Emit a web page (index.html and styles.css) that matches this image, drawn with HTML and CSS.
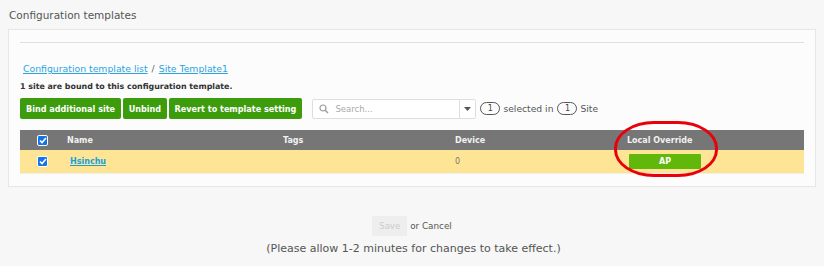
FILE: index.html
```html
<!DOCTYPE html>
<html>
<head>
<meta charset="utf-8">
<link rel="stylesheet" href="styles.css">
</head>
<body>
<div class="page">
  <div class="title">Configuration templates</div>
  <div class="panel">
    <div class="rule"></div>
    <div class="crumbs"><a>Configuration template list</a><span class="sep">/</span><a>Site Template1</a></div>
    <div class="bound">1 site are bound to this configuration template.</div>
    <div class="toolbar">
      <button class="btn">Bind additional site</button>
      <button class="btn">Unbind</button>
      <button class="btn">Revert to template setting</button>
      <div class="search">
        <svg class="mag" width="10" height="10" viewBox="0 0 10 10"><circle cx="4" cy="4" r="3" fill="none" stroke="#999" stroke-width="1.2"/><path d="M6.2 6.2 L9 9" stroke="#999" stroke-width="1.4"/></svg>
        <span class="ph">Search...</span>
        <span class="drop"><svg width="7" height="4" viewBox="0 0 7 4"><path d="M0 0 H7 L3.5 4 Z" fill="#555"/></svg></span>
      </div>
      <span class="pill">1</span><span class="info">selected in</span><span class="pill">1</span><span class="info">Site</span>
    </div>
    <div class="table">
      <div class="row head">
        <div class="c-chk"><span class="cb"><svg width="8" height="7" viewBox="0 0 8 7"><path d="M1 3.5 L3 5.5 L7 1" fill="none" stroke="#fff" stroke-width="1.6"/></svg></span></div>
        <div class="c-name">Name</div>
        <div class="c-tags">Tags</div>
        <div class="c-dev">Device</div>
        <div class="c-lo">Local Override</div>
      </div>
      <div class="row body">
        <div class="c-chk"><span class="cb"><svg width="8" height="7" viewBox="0 0 8 7"><path d="M1 3.5 L3 5.5 L7 1" fill="none" stroke="#fff" stroke-width="1.6"/></svg></span></div>
        <div class="c-name"><a>Hsinchu</a></div>
        <div class="c-tags"></div>
        <div class="c-dev">0</div>
        <div class="c-lo"><span class="ap">AP</span></div>
      </div>
      <div class="ring"></div>
    </div>
  </div>
  <div class="actions"><button class="save">Save</button><span class="or">or Cancel</span></div>
  <div class="note">(Please allow 1-2 minutes for changes to take effect.)</div>
</div>
</body>
</html>
```
FILE: styles.css
```css
* { box-sizing: border-box; }
html, body { margin: 0; padding: 0; background: #f6f7f6; }
body { font-family: "DejaVu Sans", "Liberation Sans", sans-serif; color: #444; width: 824px; height: 266px; overflow: hidden; }
.page { padding: 8px 8px 0 8px; }
.title { font-size: 10.5px; color: #555; height: 21px; line-height: 15px; padding-left: 1px; }
.panel { background: #fcfcfc; border: 1px solid #e6e6e6; height: 158px; padding: 12px 11px 0 11px; position: relative; }
.rule { height: 1px; background: #e0e0e0; margin: 0 0 20px 0; }
.crumbs { font-size: 9.3px; line-height: 12px; height: 12px; padding-left: 3px; }
.crumbs a { color: #2aa5e0; text-decoration: underline; }
.crumbs .sep { color: #666; margin: 0 4px; }
.bound { font-size: 7.9px; font-weight: bold; color: #333; margin-top: 6px; line-height: 12px; height: 12px; }
.toolbar { display: flex; align-items: center; margin-top: 5px; height: 21px; }
.btn { background: #3c9c0c; color: #fff; border: none; border-radius: 2px; font-family: inherit; font-weight: bold; font-size: 8.1px; height: 21px; padding: 0 6px; margin-right: 1.5px; }
.btn:nth-child(3) { margin-right: 10px; }
.search { width: 164px; height: 20px; border: 1px solid #dedede; background: #fff; border-radius: 2px; display: flex; align-items: center; position: relative; }
.mag { margin-left: 6px; }
.ph { font-size: 8.5px; color: #aaa; margin-left: 6px; flex: 1; }
.drop { width: 16px; height: 18px; border-left: 1px solid #dedede; display: flex; align-items: center; justify-content: center; }
.pill { display: inline-flex; align-items: center; justify-content: center; width: 20px; height: 13px; border: 1px solid #555; border-radius: 7px; font-size: 8px; color: #444; margin-left: 4px; }
.info { font-size: 9.2px; color: #555; margin-left: 3px; }
.table { margin-top: 11px; position: relative; }
.row { display: flex; align-items: center; }
.row.head { background: #767676; height: 20px; color: #f2f2f2; font-size: 8px; font-weight: bold; }
.row.body { background: #fee596; height: 24px; font-size: 8px; border-bottom: 1px solid #eee; }
.c-chk { width: 40px; display: flex; justify-content: center; padding-left: 5px; }
.cb { width: 11px; height: 11px; background: #1673e6; border-radius: 2px; border: 1px solid #fff; display: flex; align-items: center; justify-content: center; }
.c-name { width: 223px; padding-left: 7px; }
.c-name a { color: #1aa0d8; text-decoration: underline; font-weight: bold; padding-left: 3px; }
.c-tags { width: 172px; }
.c-dev { width: 155px; color: #777; }
.row.head .c-dev { color: #f2f2f2; }
.c-lo { width: 110px; display: flex; justify-content: flex-start; padding-left: 17px; }
.row.body .c-lo { padding-left: 19px; }
.ap { display: block; width: 72px; height: 15px; background: #62b80a; color: #fff; font-weight: bold; text-align: center; line-height: 15px; font-size: 8px; border-radius: 1px; }
.ring { position: absolute; left: 594px; top: -9px; width: 104px; height: 56px; border: 3px solid #e8000a; border-radius: 40px / 27px; }
.actions { display: flex; justify-content: center; align-items: center; margin-top: 29px; height: 20px; padding-left: 0px; }
.save { width: 35px; height: 20px; background: #eeeeee; border: none; color: #ccc; font-family: inherit; font-size: 8.5px; padding: 0; }
.or { font-size: 8.8px; color: #555; margin-left: 3px; }
.note { text-align: center; font-size: 11px; color: #555; margin-top: 6px; padding-left: 3px; }
```
